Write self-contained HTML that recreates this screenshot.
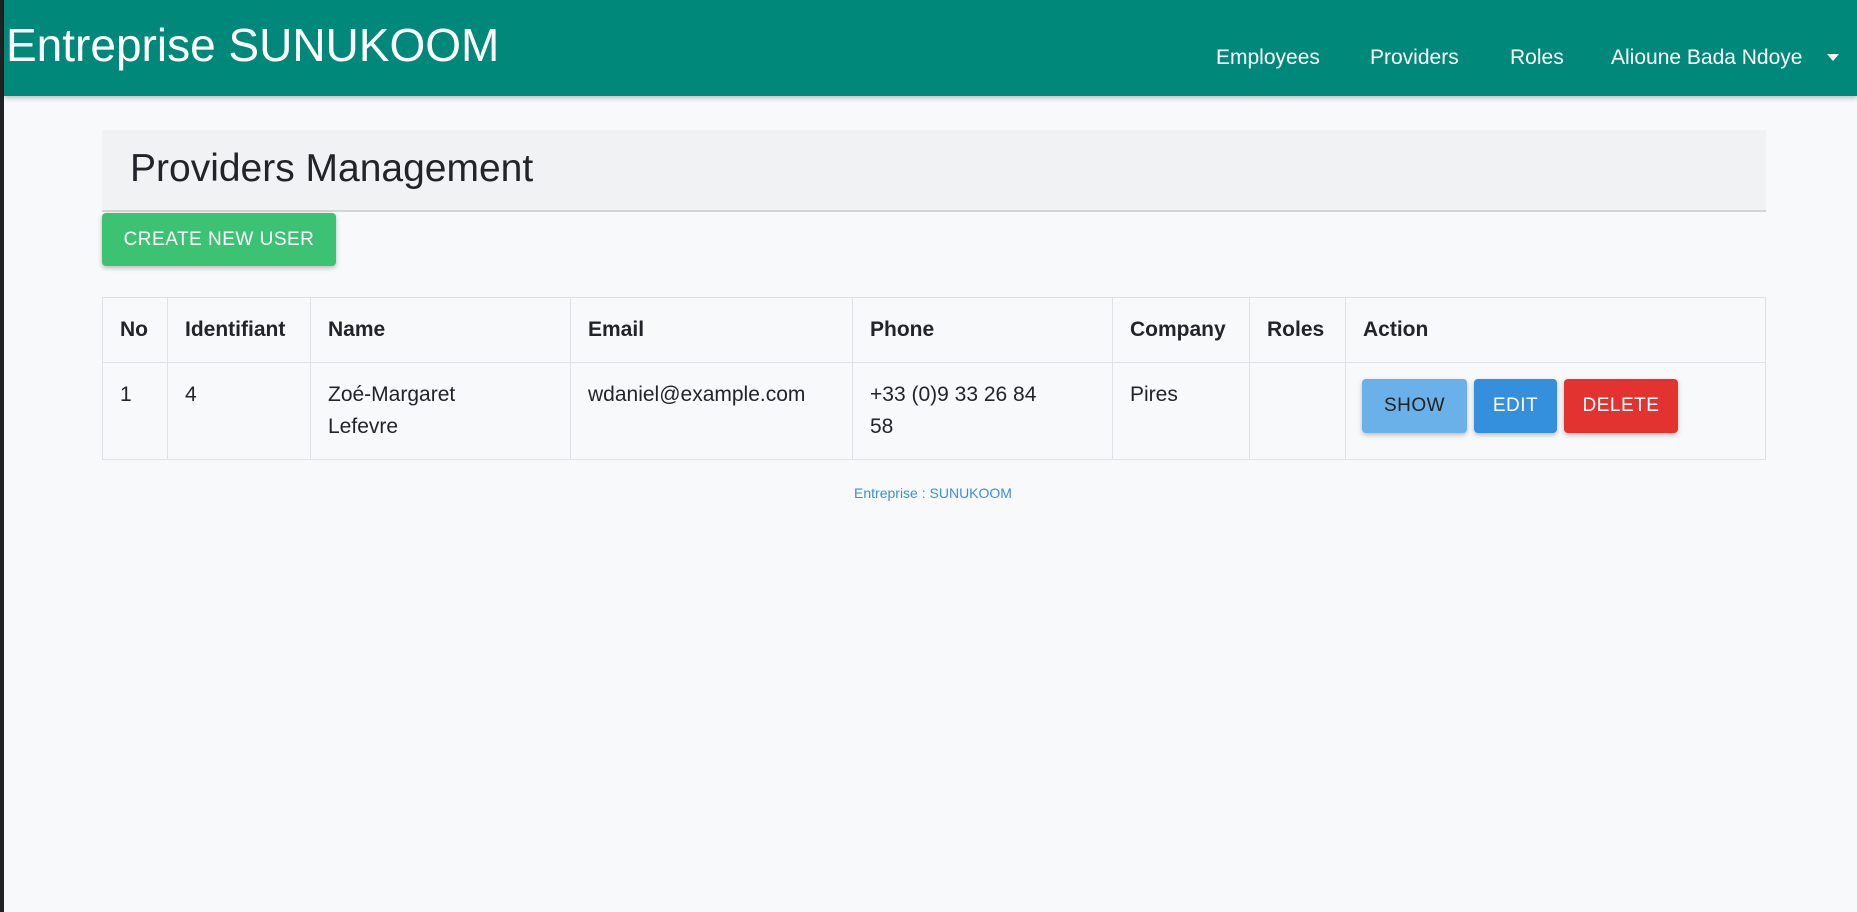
<!DOCTYPE html>
<html><head><meta charset="utf-8"><style>
*{box-sizing:border-box;margin:0;padding:0}
body{width:1857px;height:912px;background:#f8f9fa;font-family:"Liberation Sans",sans-serif;color:#212529;position:relative;overflow:hidden}
.lb{position:absolute;left:0;top:0;width:4px;height:912px;background:#222}
.nav{position:absolute;left:4px;top:0;width:1853px;height:96px;background:#00897b;box-shadow:0 2px 5px rgba(0,0,0,.25)}
.brand{position:absolute;left:2px;top:18px;font-size:46px;color:#fff}
.nav a{position:absolute;top:46px;font-size:21px;color:#fff}
.caret{position:absolute;left:1823px;top:54px;border-left:6px solid transparent;border-right:6px solid transparent;border-top:7px solid #fff}
.hdr{position:absolute;left:102px;top:130px;width:1664px;height:82px;background:#f1f2f3;border-bottom:2px solid #d4d4d4}
.hdr h1{position:absolute;left:28px;top:17px;font-size:39px;font-weight:normal}
.btn{position:absolute;border-radius:4px;font-size:19px;color:#fff;display:flex;align-items:center;justify-content:center;box-shadow:0 2px 5px rgba(0,0,0,.25);letter-spacing:.5px}
table{position:absolute;left:102px;top:297px;width:1664px;border-collapse:collapse}
td,th{border:1px solid #dee2e6;text-align:left;vertical-align:top;font-size:21px;padding:0 17px}
th{height:65px;vertical-align:middle}
td{height:97px;padding-top:16px;line-height:32px}
.foot{position:absolute;left:0;width:1866px;top:485px;text-align:center;font-size:14px;color:#3a8fd9}
</style></head><body>
<div class="lb"></div>
<div class="nav"><div class="brand">Entreprise SUNUKOOM</div>
<a style="left:1212px">Employees</a><a style="left:1366px">Providers</a><a style="left:1506px">Roles</a><a style="left:1607px">Alioune Bada Ndoye</a><div class="caret"></div></div>
<div class="hdr"><h1>Providers Management</h1></div>
<div class="btn" style="left:102px;top:213px;width:234px;height:53px;background:#3bc273">CREATE NEW USER</div>
<table><tr><th style="width:65px">No</th><th style="width:143px">Identifiant</th><th style="width:260px">Name</th><th style="width:282px">Email</th><th style="width:260px">Phone</th><th style="width:137px">Company</th><th style="width:96px">Roles</th><th>Action</th></tr>
<tr><td>1</td><td>4</td><td>Zoé-Margaret<br>Lefevre</td><td>wdaniel@example.com</td><td>+33 (0)9 33 26 84<br>58</td><td>Pires</td><td></td><td></td></tr></table>
<div class="btn" style="left:1362px;top:379px;width:105px;height:54px;background:#6ab1ea;color:#222">SHOW</div>
<div class="btn" style="left:1474px;top:379px;width:83px;height:54px;background:#348fdc">EDIT</div>
<div class="btn" style="left:1564px;top:379px;width:114px;height:54px;background:#e23331">DELETE</div>
<div class="foot">Entreprise : SUNUKOOM</div>
</body></html>
